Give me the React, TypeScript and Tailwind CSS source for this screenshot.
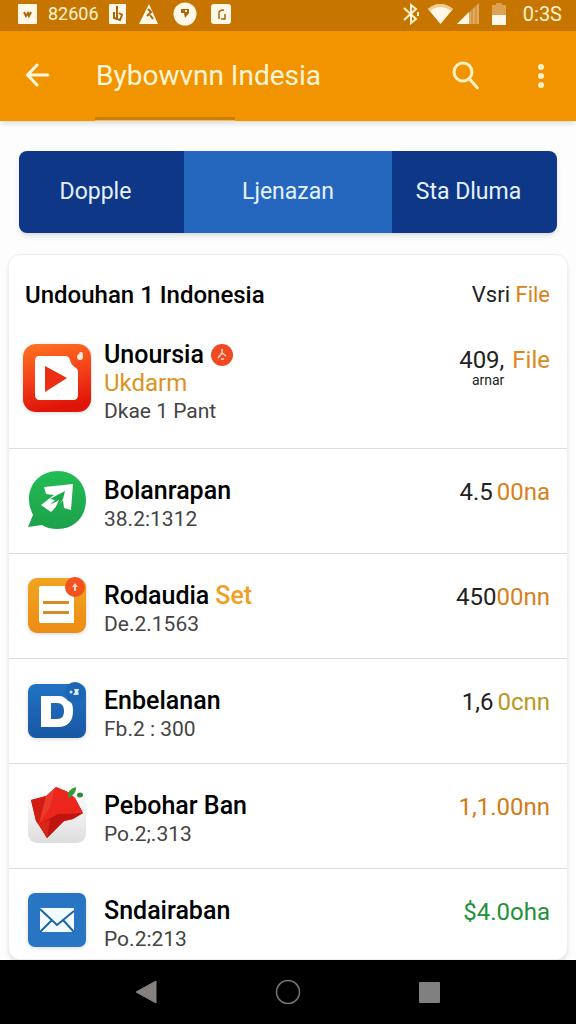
import { useState, type ReactNode } from 'react';
import { clsx } from 'clsx';

type Item = {
  name: string;
  extra?: ReactNode;
  highlight?: string;
  detail: string;
  icon: ReactNode;
  price: ReactNode;
};

const TABS = ['Dopple', 'Ljenazan', 'Sta Dluma'];

function PlayerIcon() {
  return (
    <svg width="68" height="68" viewBox="0 0 68 68" className="drop-shadow-sm">
      <defs>
        <linearGradient id="player" x1="0" y1="0" x2="0.2" y2="1">
          <stop offset="0" stopColor="#ff7421" />
          <stop offset="0.5" stopColor="#f5431a" />
          <stop offset="1" stopColor="#df1508" />
        </linearGradient>
      </defs>
      <rect width="68" height="68" rx="13" fill="url(#player)" />
      <path d="M16 12h26c3 0 4 1 5 4 1 4 3 6 6 8q2 1 2 4v23q0 5-5 5H17q-5 0-5-5V17q0-5 4-5z" fill="#fff" />
      <path d="M22 22v26l22-14z" fill="#ea2f14" />
      <circle cx="57" cy="13" r="3" fill="#ffe9df" />
      <circle cx="58" cy="10" r="2" fill="#ffe9df" />
    </svg>
  );
}

function ChatIcon() {
  return (
    <svg width="58" height="58" viewBox="0 0 58 58">
      <defs>
        <linearGradient id="chat" x1="0" y1="0" x2="0" y2="1">
          <stop offset="0" stopColor="#22bd55" />
          <stop offset="1" stopColor="#1da04a" />
        </linearGradient>
      </defs>
      <path d="M30 0C13 0 1 12 1 28c0 7 2 11 4 16L0 56l14-2c5 3 10 4 16 4 17 0 28-13 28-29C58 12 46 0 30 0z" fill="url(#chat)" />
      <path d="M16 16l29-3-2 26-7-2-1-8-12 12-10-7 13-10-8-1z" fill="#fff" />
      <path d="M37 20l-15 8 5 1-5 5 9-5-5 11 9-12z" fill="#1ba74c" />
    </svg>
  );
}

function NoteIcon() {
  return (
    <svg width="58" height="58" viewBox="0 0 58 58" className="drop-shadow-sm">
      <defs>
        <linearGradient id="note" x1="0" y1="0" x2="0" y2="1">
          <stop offset="0" stopColor="#efa51f" />
          <stop offset="1" stopColor="#ee8b14" />
        </linearGradient>
      </defs>
      <rect y="2" width="58" height="55" rx="9" fill="url(#note)" />
      <path d="M13 10h26v7l7 4v26H13q-2 0-2-2V12q0-2 2-2z" fill="#fff" />
      <path d="M15 26.500h26M15 36.500h26" stroke="#d88b23" strokeWidth="3" />
      <circle cx="47" cy="11" r="10" fill="#f4511e" />
      <path d="M47 7l3 4h-2v4h-2v-4h-2z" fill="#ffd9c8" />
    </svg>
  );
}

function LetterIcon() {
  return (
    <svg width="58" height="58" viewBox="0 0 58 58" className="drop-shadow-sm">
      <defs>
        <linearGradient id="letter" x1="0" y1="0" x2="0" y2="1">
          <stop offset="0" stopColor="#2273c4" />
          <stop offset="1" stopColor="#1857a3" />
        </linearGradient>
      </defs>
      <rect y="3" width="58" height="54" rx="8" fill="url(#letter)" />
      <circle cx="47" cy="11" r="10" fill="#1b66b5" />
      <path
        d="M13 15h18c4 0 7 2 9 5 4 1 5 4 5 10 0 10-5 16-15 16H13zM23 22v16h6c5 0 7-3 7-8s-2-8-7-8z"
        fill="#fff"
        fillRule="evenodd"
      />
      <circle cx="43" cy="11" r="1.500" fill="#d8ebff" />
      <path d="M46 8h5l-1 3q2 3-1 3h-4l2-3z" fill="#d8ebff" />
    </svg>
  );
}

function OrigamiIcon() {
  return (
    <svg width="58" height="58" viewBox="0 0 58 58">
      <defs>
        <linearGradient id="tile" x1="0" y1="0" x2="0" y2="1">
          <stop offset="0" stopColor="#ffffff" />
          <stop offset="1" stopColor="#dedede" />
        </linearGradient>
      </defs>
      <rect y="3" width="58" height="54" rx="9" fill="url(#tile)" />
      <path d="M3 14l15-4 10-9 12 5 7 6 8 15-10 6-9 2-17 17L8 35z" fill="#e3231b" />
      <path d="M3 14l15-4-7 28-3-3z" fill="#d01c13" />
      <path d="M18 10l10-9-6 21-11 16z" fill="#ea3a2c" />
      <path d="M11 38l8 14 17-17 9-2 10-6-25 1z" fill="#bf150e" />
      <path d="M28 1l12 5 7 6 8 15-25 1-19 10 11-16z" fill="#ec261c" />
      <path d="M19 52l3-18-11 4z" fill="#d9261c" />
      <path d="M40 12q-1-9 8-11 1 7-8 11z" fill="#2f9e35" />
      <ellipse cx="52" cy="9" rx="3" ry="2.500" fill="#2c8b3c" />
    </svg>
  );
}

function MailIcon() {
  return (
    <svg width="58" height="58" viewBox="0 0 58 58" className="drop-shadow-sm">
      <rect y="2" width="58" height="54" rx="7" fill="#2875c3" />
      <path d="M12 17h34v24H12z" fill="#f2fbff" />
      <path d="M12 18l17 16 17-14M12 41l12-12M46 41L35 29" fill="none" stroke="#1e62a8" strokeWidth="2" />
    </svg>
  );
}

function VerifiedBadge() {
  return (
    <svg width="24" height="24" viewBox="0 0 24 24" aria-hidden="true">
      <circle cx="12" cy="12" r="11" fill="#ee4b23" />
      <path d="M12 6v4l-4 5M12 10l4 3M11 16h3" fill="none" stroke="#ffd5c8" strokeWidth="1.500" />
    </svg>
  );
}

const ITEMS: Item[] = [
  {
    name: 'Unoursia',
    extra: <VerifiedBadge />,
    highlight: 'Ukdarm',
    detail: 'Dkae 1 Pant',
    icon: <PlayerIcon />,
    price: (
      <div className="flex gap-2 leading-6">
        <div className="flex flex-col items-end">
          <span>409,</span>
          <span className="text-sm leading-4">arnar</span>
        </div>
        <span className="text-[#dc8a1c]">File</span>
      </div>
    ),
  },
  {
    name: 'Bolanrapan',
    detail: '38.2:1312',
    icon: <ChatIcon />,
    price: <>4.5<span className="ml-1 text-[#d9801a]">00na</span></>,
  },
  {
    name: 'Rodaudia',
    extra: <span className="text-[#f0a01e]">Set</span>,
    detail: 'De.2.1563',
    icon: <NoteIcon />,
    price: <>450<span className="text-[#d9801a]">00nn</span></>,
  },
  {
    name: 'Enbelanan',
    detail: 'Fb.2 : 300',
    icon: <LetterIcon />,
    price: <>1,6<span className="ml-1 text-[#b8981f]">0cnn</span></>,
  },
  {
    name: 'Pebohar Ban',
    detail: 'Po.2;.313',
    icon: <OrigamiIcon />,
    price: <span className="text-[#d37a16]">1,1.00nn</span>,
  },
  {
    name: 'Sndairaban',
    detail: 'Po.2:213',
    icon: <MailIcon />,
    price: <span className="text-[#23923a]">$4.0oha</span>,
  },
];

function StatusBar() {
  return (
    <div className="flex h-[31px] items-center justify-between bg-[#c67600] pr-[14px] pb-1 pl-[18px] text-lg text-[#fff3d0]">
      <div className="flex items-center gap-[10px]">
        <svg width="20" height="20" viewBox="0 0 20 20">
          <rect width="19" height="20" rx="1" fill="#fff8e8" />
          <path d="M6 8l2 4 2-3 1 3 2-4" fill="none" stroke="#a8660b" strokeWidth="2" />
        </svg>
        <span>82606</span>
        <svg width="18" height="20" viewBox="0 0 18 20">
          <rect width="17" height="20" rx="1" fill="#fff8e8" />
          <path d="M8 2v14M5 8v6l6 2 2-5-3-2" fill="none" stroke="#a8660b" strokeWidth="2" />
        </svg>
        <svg width="20" height="20" viewBox="0 0 20 20" className="ml-0.5">
          <path d="M10 0l9 20H0z" fill="#fff8e8" />
          <path d="M9 5l3 3-4 4M11 11l3 4" fill="none" stroke="#a8660b" strokeWidth="2" />
        </svg>
        <svg width="24" height="24" viewBox="0 0 24 24" className="ml-1">
          <circle cx="12" cy="12" r="11.500" fill="#fff8e8" />
          <path d="M8 7h8v4l-4 5-1-5H8z" fill="#a8660b" />
          <path d="M12 8h2v2h-2z" fill="#fff8e8" />
        </svg>
        <svg width="20" height="20" viewBox="0 0 20 20" className="ml-1">
          <rect width="20" height="20" rx="3" fill="#fff8e8" />
          <path d="M8 15V9q0-3 5-3M10 15h4v-5" fill="none" stroke="#a8660b" strokeWidth="1.500" />
        </svg>
      </div>
      <div className="flex items-center gap-2">
        <svg width="18" height="22" viewBox="0 0 18 22" fill="none" stroke="#fff3d0" strokeWidth="2">
          <path d="M2 5l12 11-5 4V2l5 4L2 17" />
          <path d="M16 9v4" />
        </svg>
        <svg width="25" height="20" viewBox="0 0 25 20" className="-mr-1">
          <path d="M0 5Q12-5 25 5L12.500 20z" fill="#fff8e8" />
          <path d="M0 5Q12-5 25 5l-2 2Q12-1 2 7z" fill="#f3c98a" />
        </svg>
        <svg width="22" height="21" viewBox="0 0 22 21">
          <path d="M0 21L22 0v21z" fill="#dfa95e" />
          <path d="M0 21L12 9v12z" fill="#fff8e8" />
          <path d="M15 6v15M19 3v18" stroke="#c98530" />
        </svg>
        <svg width="16" height="22" viewBox="0 0 16 22" className="ml-1">
          <path d="M1 2h4V0h6v2h4v20H1z" fill="#dda252" />
          <path d="M1 12h14v10H1z" fill="#fff8e8" />
        </svg>
        <span className="ml-2 text-xl">0:3S</span>
      </div>
    </div>
  );
}

function AppBar() {
  return (
    <header className="relative flex h-[90px] items-center bg-[#f29400] px-[25px] text-[#fff6d8] shadow-md">
      <button aria-label="Back" className="mr-[46px]">
        <svg width="25" height="26" viewBox="0 0 25 26" fill="none" stroke="#fff8e0" strokeWidth="3" strokeLinecap="round" strokeLinejoin="round">
          <path d="M12 2L2.500 12l9.500 10M3 12h20" />
        </svg>
      </button>
      <h1 className="flex-1 text-[28px] leading-8">Bybowvnn Indesia</h1>
      <button aria-label="Search" className="mr-[51px]">
        <svg width="28" height="30" viewBox="0 0 28 30" fill="none" stroke="#fff0c4" strokeWidth="3" strokeLinecap="round">
          <circle cx="11" cy="11" r="9" />
          <path d="M17.500 18l8 9" />
        </svg>
      </button>
      <button aria-label="More options">
        <svg width="20" height="24" viewBox="0 0 20 24" fill="#fff0c4">
          <circle cx="10" cy="3" r="3" />
          <circle cx="10" cy="12" r="3" />
          <circle cx="10" cy="21" r="3" />
        </svg>
      </button>
      <span className="absolute bottom-0 left-[95px] h-1 w-[140px] border-b border-[#f5bb5c] bg-[#cc7f05]" />
    </header>
  );
}

function Row({ item, first, last }: { item: Item; first: boolean; last: boolean }) {
  return (
    <li
      className={clsx(
        'flex items-start border-[#dcdcdc] pr-[17px]',
        first ? 'pt-[7px] pb-[23px]' : 'pt-[22px]',
        !last && 'border-b',
        last && 'pb-1',
        !first && !last && 'pb-5'
      )}
    >
      <div className={clsx('flex w-[95px] shrink-0 justify-center', first && 'pt-[3px]')}>{item.icon}</div>
      <div className={clsx('min-w-0 flex-1', !first && 'pt-1.5')}>
        <h3 className="flex items-center gap-1.5 text-[25px] leading-7 font-medium text-black">
          {item.name}
          {item.extra}
        </h3>
        {item.highlight && <p className="text-2xl leading-7 text-[#dc9320]">{item.highlight}</p>}
        <p className="text-[21px] leading-7 text-[#444]">{item.detail}</p>
      </div>
      <div className="pt-[7px] text-2xl leading-7 text-[#222]">{item.price}</div>
    </li>
  );
}

export default function App() {
  const [active, setActive] = useState(1);

  return (
    <div className="flex min-h-screen flex-col bg-[#fdfdfd] font-[Roboto,sans-serif]">
      <StatusBar />
      <AppBar />

      <main className="flex flex-1 flex-col">
        <nav className="mx-[19px] mt-[30px] grid h-[82px] grid-cols-[165fr_208fr_165fr] overflow-hidden rounded-lg shadow-md">
          {TABS.map((tab, i) => (
            <button
              key={tab}
              onClick={() => setActive(i)}
              className={clsx(
                'text-[23px] text-[#e6f2ff]',
                i !== 1 && 'pr-3',
                i === active ? 'bg-[#2566bf]' : 'bg-[#0e3787]'
              )}
            >
              {tab}
            </button>
          ))}
        </nav>

        <section className="mx-2 mt-[21px] flex-1 rounded-xl border border-[#eee] bg-white shadow-md">
          <div className="flex h-[79px] items-center justify-between pr-[17px] pl-4">
            <h2 className="text-2xl font-medium text-black">Undouhan 1 Indonesia</h2>
            <p className="text-[22px] text-[#222]">
              Vsri <a href="#file" className="text-[#d9821a]">File</a>
            </p>
          </div>
          <ul>
            {ITEMS.map((item, i) => (
              <Row key={item.name} item={item} first={i === 0} last={i === ITEMS.length - 1} />
            ))}
          </ul>
        </section>
      </main>

      <footer className="flex h-16 items-center justify-center gap-[116px] bg-black">
        <button aria-label="Navigate back">
          <svg width="24" height="24" viewBox="0 0 24 24">
            <path d="M1 12L21 1v22z" fill="#85807c" stroke="#85807c" strokeLinejoin="round" />
          </svg>
        </button>
        <button aria-label="Home">
          <svg width="26" height="26" viewBox="0 0 26 26">
            <circle cx="13" cy="13" r="11.500" fill="none" stroke="#777" strokeWidth="1.500" />
          </svg>
        </button>
        <button aria-label="Recent apps">
          <svg width="24" height="24" viewBox="0 0 24 24">
            <rect x="2" y="2" width="21" height="21" rx="1" fill="#808080" />
          </svg>
        </button>
      </footer>
    </div>
  );
}
